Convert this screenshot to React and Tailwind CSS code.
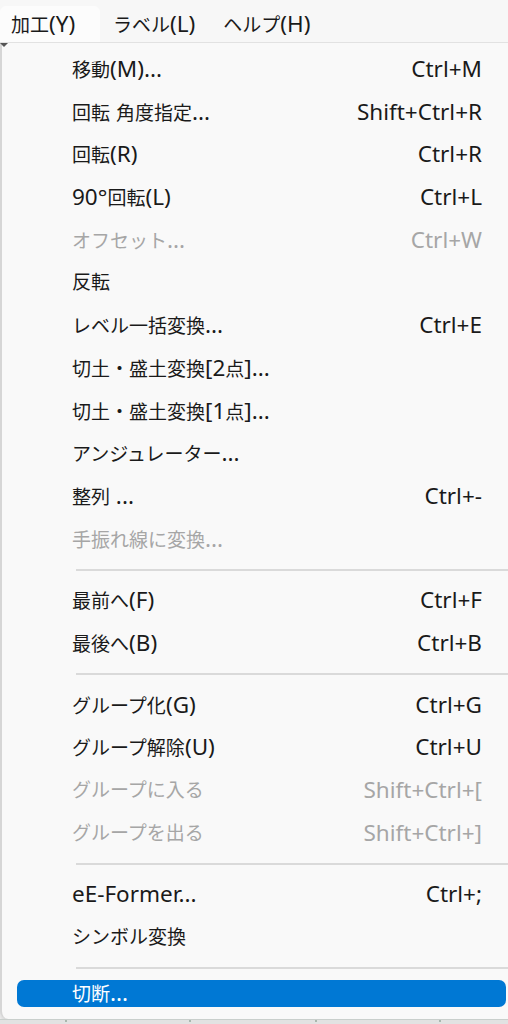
const items = [
  { label: "移動(M)...", key: "Ctrl+M" },
  { label: "回転 角度指定...", key: "Shift+Ctrl+R" },
  { label: "回転(R)", key: "Ctrl+R" },
  { label: "90°回転(L)", key: "Ctrl+L" },
  { label: "オフセット...", key: "Ctrl+W", disabled: true },
  { label: "反転" },
  { label: "レベル一括変換...", key: "Ctrl+E" },
  { label: "切土・盛土変換[2点]..." },
  { label: "切土・盛土変換[1点]..." },
  { label: "アンジュレーター..." },
  { label: "整列 ...", key: "Ctrl+-" },
  { label: "手振れ線に変換...", disabled: true },
  "sep",
  { label: "最前へ(F)", key: "Ctrl+F" },
  { label: "最後へ(B)", key: "Ctrl+B" },
  "sep",
  { label: "グループ化(G)", key: "Ctrl+G" },
  { label: "グループ解除(U)", key: "Ctrl+U" },
  { label: "グループに入る", key: "Shift+Ctrl+[", disabled: true },
  { label: "グループを出る", key: "Shift+Ctrl+]", disabled: true },
  "sep",
  { label: "eE-Former...", key: "Ctrl+;" },
  { label: "シンボル変換" },
  "sep",
];

// Latin runs are drawn a bit larger than the kana/kanji, like Segoe UI next to Yu Gothic
const CJK = /[\u3000-\u30ff\u4e00-\u9fff\uff00-\uffef]+/g;

function Mixed({ text }) {
  const parts = [];
  let last = 0;
  text.replace(CJK, (m, idx) => {
    if (idx > last) parts.push({ t: text.slice(last, idx), latin: true });
    parts.push({ t: m, latin: false });
    last = idx + m.length;
    return m;
  });
  if (last < text.length) parts.push({ t: text.slice(last), latin: true });
  return (
    <span className="whitespace-pre">
      {parts.map((p, i) => (
        <span key={i} className={p.latin ? "text-[22.5px]" : "text-[19px]"}>
          {p.t}
        </span>
      ))}
    </span>
  );
}

function Row({ item }) {
  return (
    <div
      className={`h-[42.7px] flex items-center pl-[70px] pr-[26px] ${
        item.disabled ? "text-[#a6a6a6]" : "text-[#1a1a1a]"
      }`}
    >
      <span className="flex-1">
        <Mixed text={item.label} />
      </span>
      {item.key && <Mixed text={item.key} />}
    </div>
  );
}

export default function App() {
  return (
    <div
      className="w-[508px] h-[1024px] overflow-hidden bg-[#f3f3f3] text-[19px] leading-none flex flex-col"
      style={{ fontFamily: '"Noto Sans", "Noto Sans CJK JP", sans-serif' }}
    >
      {/* menu bar */}
      <div className="h-[43px] shrink-0 bg-[#f7f7f7] flex items-end text-[#1a1a1a] border-b border-[#e3e3e3]">
        <div className="h-[36px] w-[100px] rounded-t-[6px] bg-[#fcfcfc] flex items-center pl-[11px]">
          <Mixed text="加工(Y)" />
        </div>
        <div className="h-[36px] flex items-center pl-[13px]">
          <Mixed text="ラベル(L)" />
        </div>
        <div className="h-[36px] flex items-center pl-[28px]">
          <Mixed text="ヘルプ(H)" />
        </div>
      </div>

      {/* dropdown */}
      <div className="relative flex-1 flex flex-col">
        <div className="h-[976px] shrink-0 bg-[#f9f9f9] border-l-2 border-[#d6d6d6] rounded-bl-[8px] shadow-[0_3px_4px_rgba(0,0,0,0.12)] pt-[5px] flex flex-col">
          {items.map((it, i) =>
            it === "sep" ? (
              <div key={i} className="h-[19px] flex items-center pl-[74px]">
                <div className="h-[2px] w-full bg-[#dadada]" />
              </div>
            ) : (
              <Row key={i} item={it} />
            )
          )}
          <div className="ml-[15px] mr-[2px] mt-[2px] h-[27px] rounded-[7px] bg-[#0078d4] text-white flex items-center pl-[55px]">
            <Mixed text="切断..." />
          </div>
        </div>
        <div className="absolute left-0 top-0 w-0 h-0 border-l-[4px] border-r-[4px] border-t-[4px] border-l-transparent border-r-transparent border-t-[#555]" />
        <div className="flex-1 bg-[#e2e2e2] border-t border-[#c9cfcc] relative">
          <div className="absolute left-[65px] top-0 w-[2px] h-[2px] bg-[#a9b8ae]" />
          <div className="absolute left-[189px] top-0 w-[2px] h-[2px] bg-[#a9b8ae]" />
          <div className="absolute left-[315px] top-0 w-[2px] h-[2px] bg-[#a9b8ae]" />
          <div className="absolute left-[439px] top-0 w-[2px] h-[2px] bg-[#a9b8ae]" />
        </div>
      </div>
    </div>
  );
}
